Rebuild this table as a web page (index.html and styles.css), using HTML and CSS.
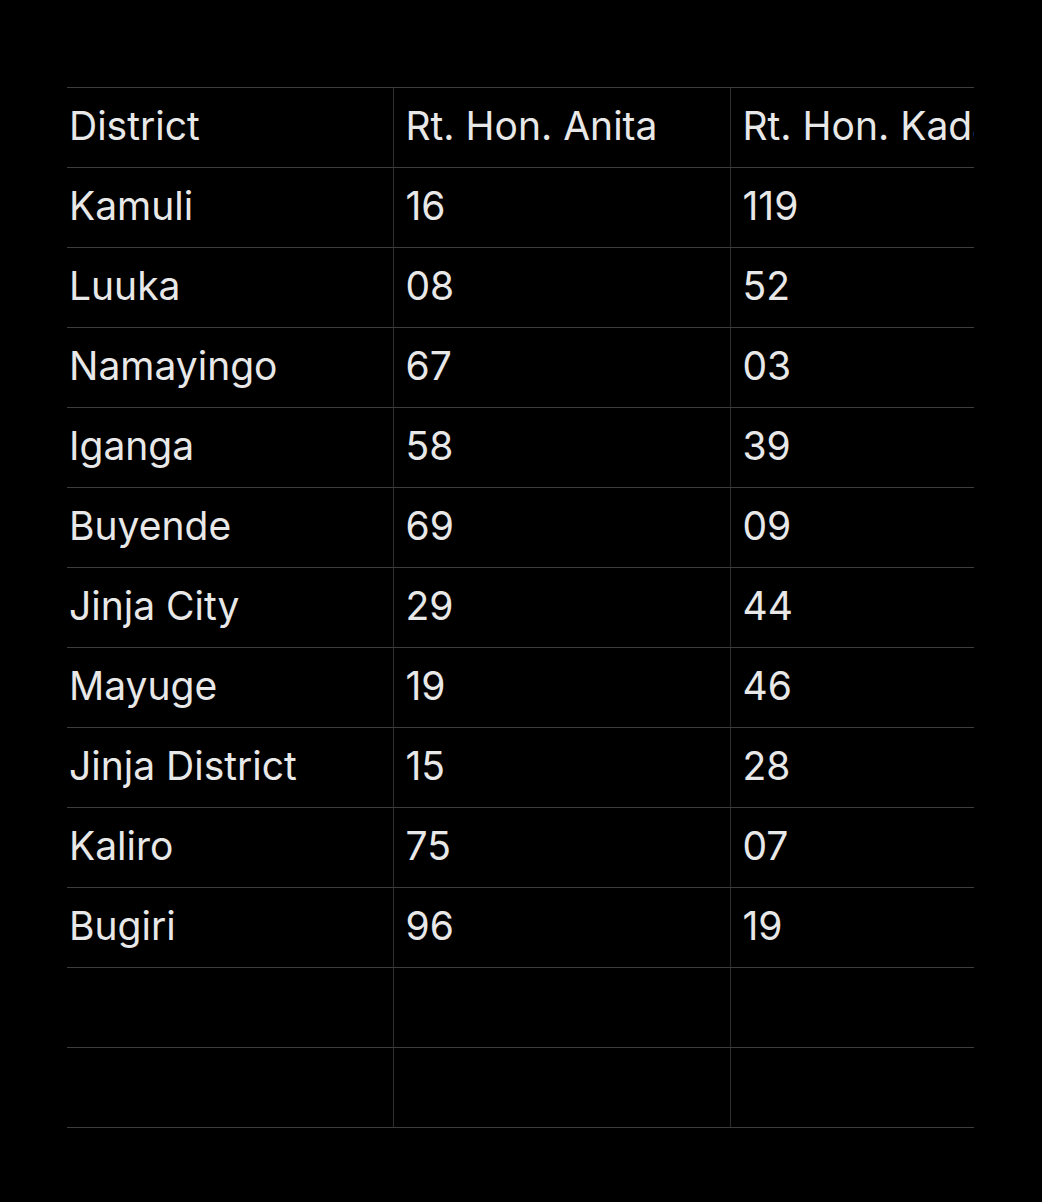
FILE: index.html
```html
<!DOCTYPE html>
<html>
<head>
<meta charset="utf-8">
<link rel="stylesheet" href="styles.css">
</head>
<body>
<div class="wrap">
  <table class="grid">
    <colgroup><col class="c1"><col class="c2"><col class="c3"></colgroup>
    <tr><td>District</td><td>Rt. Hon. Anita</td><td>Rt. Hon. Kadaga</td></tr>
    <tr><td>Kamuli</td><td>16</td><td>119</td></tr>
    <tr><td>Luuka</td><td>08</td><td>52</td></tr>
    <tr><td>Namayingo</td><td>67</td><td>03</td></tr>
    <tr><td>Iganga</td><td>58</td><td>39</td></tr>
    <tr><td>Buyende</td><td>69</td><td>09</td></tr>
    <tr><td>Jinja City</td><td>29</td><td>44</td></tr>
    <tr><td>Mayuge</td><td>19</td><td>46</td></tr>
    <tr><td>Jinja District</td><td>15</td><td>28</td></tr>
    <tr><td>Kaliro</td><td>75</td><td>07</td></tr>
    <tr><td>Bugiri</td><td>96</td><td>19</td></tr>
    <tr><td></td><td></td><td></td></tr>
    <tr><td></td><td></td><td></td></tr>
  </table>
</div>
</body>
</html>
```
FILE: styles.css
```css
html, body {
  margin: 0;
  padding: 0;
  background: #000;
}
body {
  width: 1042px;
  height: 1202px;
  overflow: hidden;
  padding-top: 87px;
  box-sizing: border-box;
}
.wrap {
  margin-left: 67px;
  width: 907px;
  overflow: hidden;
}
.grid {
  border-collapse: collapse;
  table-layout: fixed;
  width: 1250px;
  font-family: Inter, "Liberation Sans", sans-serif;
  font-size: 39px;
  color: #e8e8e8;
}
.c1 { width: 326px; }
.c2 { width: 337px; }
.c3 { width: 587px; }
.grid tr:first-child td { border-top: 1px solid #3c3c3c; }
.grid td {
  height: 80px;
  padding: 0 0 5px 12px;
  border-bottom: 1px solid #3c3c3c;
  border-left: 1px solid #2e2e2e;
  white-space: nowrap;
  vertical-align: middle;
  box-sizing: border-box;
}
.grid td:first-child {
  border-left: none;
  padding-left: 2px;
}
```
